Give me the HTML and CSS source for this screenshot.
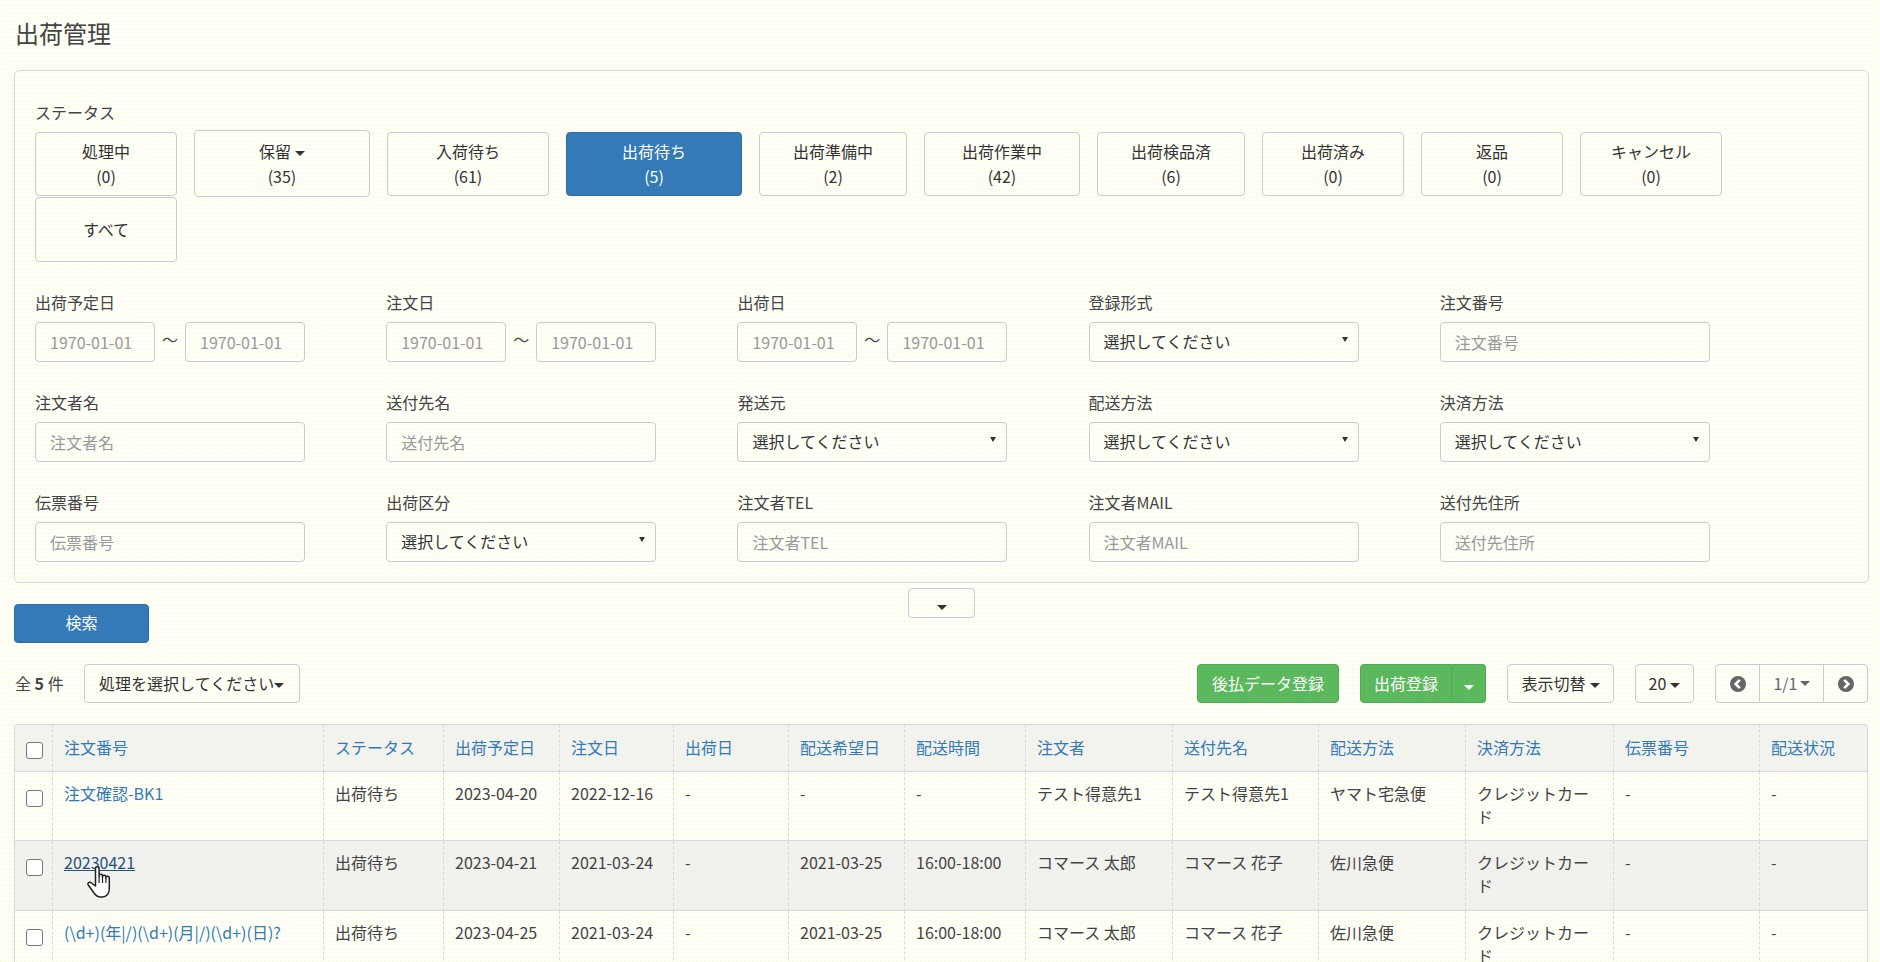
FILE: index.html
```html
<!DOCTYPE html>
<html lang="ja">
<head>
<meta charset="utf-8">
<title>出荷管理</title>
<link rel="stylesheet" href="styles.css">
</head>
<body>
<h1 class="title">出荷管理</h1>
<section class="panel">
  <div class="field-label">ステータス</div>
  <div class="statuses">
    <a class="status w142"><span>処理中</span><span>(0)</span></a>
    <a class="status w176 tall"><span>保留<i class="caret"></i></span><span>(35)</span></a>
    <a class="status w162"><span>入荷待ち</span><span>(61)</span></a>
    <a class="status w176 active"><span>出荷待ち</span><span>(5)</span></a>
    <a class="status w148"><span>出荷準備中</span><span>(2)</span></a>
    <a class="status w156"><span>出荷作業中</span><span>(42)</span></a>
    <a class="status w148"><span>出荷検品済</span><span>(6)</span></a>
    <a class="status w142"><span>出荷済み</span><span>(0)</span></a>
    <a class="status w142"><span>返品</span><span>(0)</span></a>
    <a class="status w142"><span>キャンセル</span><span>(0)</span></a>
    <a class="status w142 all"><span>すべて</span></a>
  </div>
  <div class="fields">
    <div class="field"><label class="field-label">出荷予定日</label><div class="range"><input class="input" placeholder="1970-01-01"><span class="tilde">〜</span><input class="input" placeholder="1970-01-01"></div></div>
    <div class="field"><label class="field-label">注文日</label><div class="range"><input class="input" placeholder="1970-01-01"><span class="tilde">〜</span><input class="input" placeholder="1970-01-01"></div></div>
    <div class="field"><label class="field-label">出荷日</label><div class="range"><input class="input" placeholder="1970-01-01"><span class="tilde">〜</span><input class="input" placeholder="1970-01-01"></div></div>
    <div class="field"><label class="field-label">登録形式</label><div class="select">選択してください</div></div>
    <div class="field"><label class="field-label">注文番号</label><input class="input" placeholder="注文番号"></div>

    <div class="field"><label class="field-label">注文者名</label><input class="input" placeholder="注文者名"></div>
    <div class="field"><label class="field-label">送付先名</label><input class="input" placeholder="送付先名"></div>
    <div class="field"><label class="field-label">発送元</label><div class="select">選択してください</div></div>
    <div class="field"><label class="field-label">配送方法</label><div class="select">選択してください</div></div>
    <div class="field"><label class="field-label">決済方法</label><div class="select">選択してください</div></div>

    <div class="field"><label class="field-label">伝票番号</label><input class="input" placeholder="伝票番号"></div>
    <div class="field"><label class="field-label">出荷区分</label><div class="select">選択してください</div></div>
    <div class="field"><label class="field-label">注文者TEL</label><input class="input" placeholder="注文者TEL"></div>
    <div class="field"><label class="field-label">注文者MAIL</label><input class="input" placeholder="注文者MAIL"></div>
    <div class="field"><label class="field-label">送付先住所</label><input class="input" placeholder="送付先住所"></div>
  </div>
</section>

<div class="search-row">
  <button class="btn primary search">検索</button>
  <button class="btn toggle"><i class="caret"></i></button>
</div>

<div class="toolbar">
  <div class="toolbar-left">
    <span class="count">全 <b>5</b> 件</span>
    <button class="btn action">処理を選択してください<i class="caret tight"></i></button>
  </div>
  <div class="toolbar-right">
    <button class="btn success paylater">後払データ登録</button>
    <div class="split">
      <button class="btn success main">出荷登録</button>
      <button class="btn success side"><i class="caret"></i></button>
    </div>
    <button class="btn columns">表示切替<i class="caret"></i></button>
    <button class="btn perpage">20<i class="caret"></i></button>
    <div class="pager">
      <button class="page-arrow"><svg width="18" height="18" viewBox="0 0 18 18"><circle cx="9" cy="9" r="8" fill="#666"/><path d="M10.8 4.8 6.6 9l4.2 4.2" fill="none" stroke="#fff" stroke-width="2.6"/></svg></button>
      <button class="page-num">1/1<i class="caret"></i></button>
      <button class="page-arrow"><svg width="18" height="18" viewBox="0 0 18 18"><circle cx="9" cy="9" r="8" fill="#666"/><path d="M7.2 4.8 11.4 9l-4.2 4.2" fill="none" stroke="#fff" stroke-width="2.6"/></svg></button>
    </div>
  </div>
</div>

<div class="table-wrap">
  <table class="orders">
    <colgroup>
      <col class="c-check"><col class="c-order"><col class="c-status"><col class="c-plan"><col class="c-date"><col class="c-ship"><col class="c-wish"><col class="c-time"><col class="c-name"><col class="c-dest"><col class="c-method"><col class="c-pay"><col class="c-slip"><col class="c-state">
    </colgroup>
    <thead>
      <tr>
        <th><input type="checkbox" class="check"></th>
        <th><a>注文番号</a></th><th><a>ステータス</a></th><th><a>出荷予定日</a></th><th><a>注文日</a></th><th><a>出荷日</a></th><th><a>配送希望日</a></th><th><a>配送時間</a></th><th><a>注文者</a></th><th><a>送付先名</a></th><th><a>配送方法</a></th><th><a>決済方法</a></th><th><a>伝票番号</a></th><th><a>配送状況</a></th>
      </tr>
    </thead>
    <tbody>
      <tr>
        <td><input type="checkbox" class="check"></td>
        <td><a>注文確認-BK1</a></td><td>出荷待ち</td><td>2023-04-20</td><td>2022-12-16</td><td>-</td><td>-</td><td>-</td><td>テスト得意先1</td><td>テスト得意先1</td><td>ヤマト宅急便</td><td>クレジットカード</td><td>-</td><td>-</td>
      </tr>
      <tr class="hover">
        <td><input type="checkbox" class="check"></td>
        <td><a class="hovered">20230421</a></td><td>出荷待ち</td><td>2023-04-21</td><td>2021-03-24</td><td>-</td><td>2021-03-25</td><td>16:00-18:00</td><td>コマース 太郎</td><td>コマース 花子</td><td>佐川急便</td><td>クレジットカード</td><td>-</td><td>-</td>
      </tr>
      <tr>
        <td><input type="checkbox" class="check"></td>
        <td><a>(\d+)(年|/)(\d+)(月|/)(\d+)(日)?</a></td><td>出荷待ち</td><td>2023-04-25</td><td>2021-03-24</td><td>-</td><td>2021-03-25</td><td>16:00-18:00</td><td>コマース 太郎</td><td>コマース 花子</td><td>佐川急便</td><td>クレジットカード</td><td>-</td><td>-</td>
      </tr>
    </tbody>
  </table>
</div>

<svg class="hand" width="26" height="33" viewBox="0 0 26 33">
  <path d="M8.5 16V3.5a1.8 1.8 0 0 1 3.6 0V11a1.7 1.7 0 0 1 3.4 0v1a1.7 1.7 0 0 1 3.4 0v1a1.7 1.7 0 0 1 3.4 0v11c0 4-2.5 8-7 8h-2c-3 0-5-2-7-5L1.3 20c-1-1.5.5-3.5 2.5-2.5L8.5 21z" fill="#fff" stroke="#222" stroke-width="1.5" stroke-linejoin="round"/>
  <path d="M12.1 11v7M15.5 12v6M18.9 13v5" fill="none" stroke="#222" stroke-width="1.2"/>
</svg>
</body>
</html>
```
FILE: styles.css
```css
* { box-sizing: border-box; }
html, body { height: 962px; overflow: hidden; }
body {
  margin: 0;
  padding: 0 11px 0 14px;
  position: relative;
  background-color: #fefefd;
  background-image: radial-gradient(circle at 1px 1px, #fdfde0 0.8px, transparent 0.9px);
  background-size: 4px 4px;
  color: #333;
  font: 16px/23px "Noto Sans CJK JP", "Noto Sans", sans-serif;
}
a { color: #337ab7; text-decoration: none; }
.title {
  margin: 0;
  height: 70px;
  padding: 17px 0 0 1px;
  font-size: 24px;
  line-height: 32px;
  font-weight: 400;
  color: #444;
}
.panel {
  height: 513px;
  padding: 30px 20px 0;
  border: 1px solid #d8d8d8;
  border-radius: 5px;
}
.field-label { display: block; color: #444; line-height: 23px; }
.panel > .field-label { margin-bottom: 6px; }
.statuses { display: flex; flex-wrap: wrap; align-items: center; column-gap: 17px; }
.status {
  display: flex;
  flex-direction: column;
  align-items: center;
  justify-content: center;
  height: 64px;
  border: 1px solid #ccc;
  border-radius: 4px;
  color: #333;
  line-height: 25px;
}
.status.tall { height: 67px; }
.status.all { height: 65px; }
.status.active { background: #337ab7; border-color: #2e6da4; color: #fff; }
.w142 { width: 142px; }
.w148 { width: 148px; }
.w156 { width: 156px; }
.w162 { width: 162px; }
.w176 { width: 176px; }
.caret {
  display: inline-block;
  width: 0;
  height: 0;
  margin-left: 4px;
  vertical-align: 2px;
  border-top: 5px solid currentColor;
  border-left: 5px solid transparent;
  border-right: 5px solid transparent;
}
.caret.tight { margin-left: 0; }
.fields {
  display: grid;
  grid-template-columns: repeat(5, 351.2px);
  row-gap: 29px;
  margin-top: 29px;
}
.field { width: 270px; }
.field .field-label { margin-bottom: 8px; }
.input, .select {
  display: block;
  width: 100%;
  height: 40px;
  padding: 0 14px 1px;
  border: 1px solid #ccc;
  border-radius: 4px;
  background: transparent;
  color: #333;
  font: inherit;
  line-height: 36px;
  outline: none;
}
.input::placeholder { color: #999; opacity: 1; }
.select { position: relative; }
.select::after {
  content: "";
  position: absolute;
  right: 10px;
  top: 14px;
  border-top: 5px solid #333;
  border-left: 3px solid transparent;
  border-right: 3px solid transparent;
}
.range { display: flex; align-items: center; }
.range .input { flex: 1 1 0; min-width: 0; }
.tilde { width: 30px; text-align: center; margin-top: -6px; color: #444; }
.search-row {
  display: grid;
  grid-template-columns: 1fr auto 1fr;
  align-items: start;
  height: 81px;
}
.btn {
  height: 39px;
  padding: 0 14px;
  border: 1px solid #ccc;
  border-radius: 4px;
  background: transparent;
  color: #333;
  font: inherit;
  white-space: nowrap;
}
.btn.primary { background: #337ab7; border-color: #2e6da4; color: #fff; }
.btn.success { background: #5cb85c; border-color: #4cae4c; color: #fff; }
.search { width: 135px; margin-top: 21px; padding-bottom: 2px; justify-self: start; }
.toggle { width: 67px; height: 30px; margin-top: 5px; padding: 0; }
.toggle .caret { margin-left: 0; vertical-align: 0; }
.toolbar { display: flex; justify-content: space-between; align-items: center; height: 39px; margin-right: 1px; }
.toolbar-left { display: flex; align-items: center; gap: 20px; padding-left: 1px; }
.action { width: 216px; padding: 0; }
.count { color: #444; }
.toolbar-right { display: flex; align-items: center; gap: 21px; }
.paylater { width: 142px; padding: 0; }
.columns { width: 107px; padding: 0; }
.perpage { width: 59px; padding: 0; }
.split { display: flex; }
.split .main { width: 92px; padding: 0; border-radius: 4px 0 0 4px; border-right-color: #4cae4c; }
.split .side { width: 34px; padding: 0; border-left: 0; border-radius: 0 4px 4px 0; }
.split .side .caret { margin-left: 0; vertical-align: 0; }
.pager { display: flex; height: 39px; border: 1px solid #ccc; border-radius: 4px; }
.pager button { border: 0; background: none; padding: 0; font: inherit; color: #666; display: flex; align-items: center; justify-content: center; }
.pager .caret { margin-left: 2px; }
.page-arrow { width: 43px; }
.page-num { width: 65px; border-left: 1px solid #ccc !important; border-right: 1px solid #ccc !important; }
.table-wrap {
  margin-top: 21px;
  margin-right: 1px;
  border: 1px solid #d8d8d8;
  border-bottom: 0;
  border-radius: 4px 4px 0 0;
  overflow: hidden;
}
.orders { width: 1852px; table-layout: fixed; border-collapse: separate; border-spacing: 0; }
.c-check { width: 38px; }
.c-order { width: 271px; }
.c-status { width: 120px; }
.c-plan { width: 116px; }
.c-date { width: 114px; }
.c-ship { width: 115px; }
.c-wish { width: 116px; }
.c-time { width: 121px; }
.c-name { width: 147px; }
.c-dest { width: 146px; }
.c-method { width: 147px; }
.c-pay { width: 148px; }
.c-slip { width: 146px; }
.c-state { width: 107px; }
th, td {
  padding: 10px 11px 12px;
  text-align: left;
  font-weight: 400;
  vertical-align: top;
  border-right: 1px dashed #d8d8e0;
  border-bottom: 1px solid #d8d8d8;
  color: #444;
}
th { padding: 11px 11px 12px; background: #f3f3ee; }
th:last-child, td:last-child { border-right: 0; }
.hover td { padding-bottom: 13px; background: #f1f1ed; }
.hovered { color: #23527c; text-decoration: underline; }
.check {
  appearance: none;
  display: block;
  width: 17px;
  height: 17px;
  margin: 8px 0 0 0;
  border: 1.5px solid #777;
  border-radius: 3px;
  background: #fff;
}
th .check { margin-top: 6px; }
th:first-child, td:first-child { padding-left: 11px; padding-right: 0; }
.hand { position: absolute; left: 87px; top: 865px; }
```
